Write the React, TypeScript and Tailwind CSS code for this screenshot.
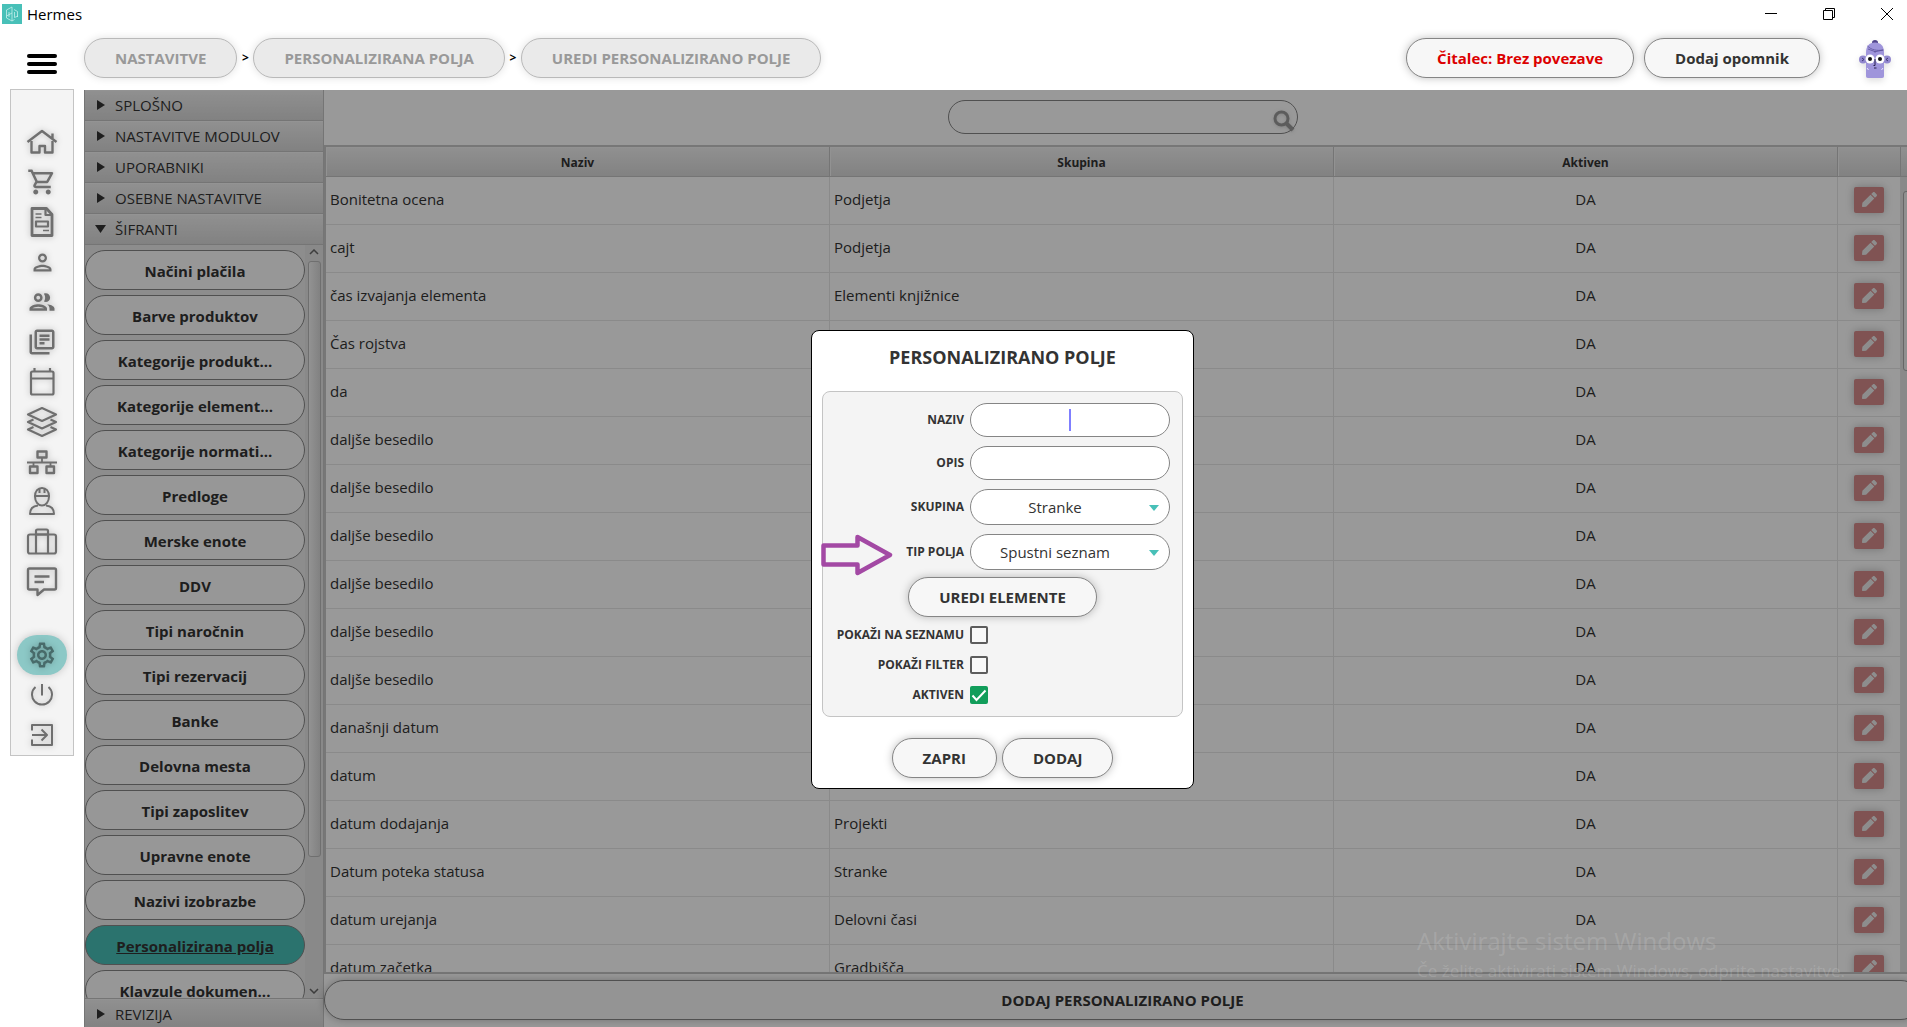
import { twMerge } from 'tailwind-merge';
import type { ReactNode } from 'react';
import { FaPen } from 'react-icons/fa';
import {
  MdOutlineShoppingCart,
  MdOutlinePerson,
  MdOutlineGroup,
  MdOutlineLibraryBooks,
  MdOutlineSettings,
} from 'react-icons/md';

const sections = ['SPLOŠNO', 'NASTAVITVE MODULOV', 'UPORABNIKI', 'OSEBNE NASTAVITVE'];

const codeLists = [
  'Načini plačila',
  'Barve produktov',
  'Kategorije produkt...',
  'Kategorije element...',
  'Kategorije normati...',
  'Predloge',
  'Merske enote',
  'DDV',
  'Tipi naročnin',
  'Tipi rezervacij',
  'Banke',
  'Delovna mesta',
  'Tipi zaposlitev',
  'Upravne enote',
  'Nazivi izobrazbe',
  'Personalizirana polja',
  'Klavzule dokumen...',
];

const rows = [
  { name: 'Bonitetna ocena', group: 'Podjetja' },
  { name: 'cajt', group: 'Podjetja' },
  { name: 'čas izvajanja elementa', group: 'Elementi knjižnice' },
  { name: 'Čas rojstva', group: 'Stranke' },
  { name: 'da', group: 'Stranke' },
  { name: 'daljše besedilo', group: 'Stranke' },
  { name: 'daljše besedilo', group: 'Stranke' },
  { name: 'daljše besedilo', group: 'Stranke' },
  { name: 'daljše besedilo', group: 'Stranke' },
  { name: 'daljše besedilo', group: 'Stranke' },
  { name: 'daljše besedilo', group: 'Stranke' },
  { name: 'današnji datum', group: 'Stranke' },
  { name: 'datum', group: 'Stranke' },
  { name: 'datum dodajanja', group: 'Projekti' },
  { name: 'Datum poteka statusa', group: 'Stranke' },
  { name: 'datum urejanja', group: 'Delovni časi' },
  { name: 'datum začetka', group: 'Gradbišča' },
];

function Drawn({ children, width = 2.4 }: { children: ReactNode; width?: number }) {
  return (
    <svg
      viewBox="0 0 40 40"
      className="size-10"
      fill="none"
      stroke="currentColor"
      strokeWidth={width}
      strokeLinejoin="round"
      aria-hidden="true"
    >
      {children}
    </svg>
  );
}

const HomeIcon = () => (
  <Drawn>
    <path d="M5.5 20 20 9l14.500 11M30.500 17v-5.500" />
    <path d="M9.500 19v11.500h8V24h5.500v6.500h7.500V19" />
  </Drawn>
);

const InvoiceIcon = () => (
  <Drawn width={2.2}>
    <path d="M10 6.500h14.500l5.500 6V33.500H10z" strokeWidth="2.800" />
    <path d="M23.500 6.500v6.500H30" />
    <path d="M13.500 12h6M13.500 15.500h6M21 28.500h6" strokeWidth="1.600" />
    <path d="M14 19.500h12v5H14z" />
  </Drawn>
);

const CalendarIcon = () => (
  <Drawn width={2.2}>
    <rect x="9" y="9.500" width="22.500" height="23" rx="1.500" />
    <path d="M9 16.500h22.500M12.500 6v4M28 6v4" />
  </Drawn>
);

const LayersIcon = () => (
  <Drawn width={2.2}>
    <path d="M20 6 34 12.500 20 19 6 12.500z" />
    <path d="m11.500 17.500-5.500 2.500 14 6.500 14-6.500-5.500-2.500" />
    <path d="m11.500 25-5.500 2.500L20 34l14-6.500-5.500-2.500" />
  </Drawn>
);

const NetworkIcon = () => (
  <Drawn width={2.4}>
    <path d="M15.500 9.500h9v6h-9zM8 24.500h7.500V31H8zM24.500 24.500H32V31h-7.500z" />
    <path d="M5 20.500h30M20 16v4.500M11.500 20.500v4M28.500 20.500v4" strokeWidth="1.800" />
  </Drawn>
);

const WorkerIcon = () => (
  <Drawn width={2}>
    <path d="M13 14.500c0-5.500 3-8.500 7-8.500s7 3 7 8.500c0 5-3 9-7 9s-7-4-7-9z" />
    <path d="M12 14h16M17.500 6.500V11M22.500 6.500V11" />
    <path d="M16 23.500c-5 .5-8 2.500-8 8.500h24c0-6-3-8-8-8.500" />
  </Drawn>
);

const SuitcaseIcon = () => (
  <Drawn width={2.2}>
    <rect x="6" y="12.500" width="28" height="19" rx="2" />
    <path d="M14 31.500V9c0-1 .5-1.500 1.500-1.500h9c1 0 1.500.5 1.500 1.500v22.500M14 12.500h12" />
  </Drawn>
);

const CommentIcon = () => (
  <Drawn>
    <path d="M7.500 6.500h25c1 0 1.500.5 1.500 1.500v18c0 1-.5 1.500-1.500 1.500H22L15.500 33v-5.500h-8c-1 0-1.500-.5-1.500-1.500V8c0-1 .5-1.500 1.500-1.500z" />
    <path d="M12.500 14.500h15M12.500 20h9.500" />
  </Drawn>
);

const PowerIcon = () => (
  <Drawn width={2}>
    <path d="M13.500 12A10 10 0 1 0 26.500 12M20 9v11.500" />
  </Drawn>
);

const ExitIcon = () => (
  <Drawn width={2}>
    <path d="M10 15.500V10h20v20H10v-5.500M10 20h14.500M19.500 14.500 25 20l-5.500 5.500" />
  </Drawn>
);

function Mascot() {
  return (
    <svg viewBox="0 0 32 38" className="h-[38px] w-8 drop-shadow-md" aria-label="Hermes">
      <ellipse cx="16" cy="2.500" rx="3" ry="2.500" fill="#51458c" />
      <circle cx="4" cy="19.500" r="4" fill="#9288cf" />
      <circle cx="28" cy="19.500" r="4" fill="#9288cf" />
      <path d="M3 18l2 1.500L3 21M29 18l-2 1.500 2 1.500" fill="none" stroke="#433a78" />
      <path d="M7 13C7 6 10 2.500 16 2.500S25 6 25 13v23c0 1-.5 2-2 2H9c-1.500 0-2-1-2-2z" fill="#9f95db" />
      <path d="M8.500 6c4 4 9 5 16 4M9 9l8 3M15 12l9-2" fill="none" stroke="#5c519b" strokeWidth=".8" />
      <circle cx="11" cy="19" r="4.500" fill="#fff" />
      <circle cx="21" cy="19" r="4.500" fill="#fff" />
      <circle cx="11" cy="19" r="2" fill="#111" />
      <circle cx="21" cy="19" r="2" fill="#111" />
      <path d="M16 19v6.500h-1.500M15 28h2.500" fill="none" stroke="#28204f" />
      <path d="M8 28l1.500 2M24 28l-1.500 2" stroke="#e8e4ff" />
    </svg>
  );
}

function PillButton({ children, className }: { children: ReactNode; className?: string }) {
  return (
    <button
      type="button"
      className={twMerge(
        'h-10 rounded-full border border-[#858585] bg-[#f7f7f7] px-[30px] text-[15px] font-bold whitespace-nowrap shadow-[0_0_8px_rgba(0,0,0,0.25)]',
        className
      )}
    >
      {children}
    </button>
  );
}

const crumb = 'border-[#b9b9b9] bg-[#eaeaea] text-[#999] shadow-[0_0_8px_rgba(0,0,0,0.12)]';
const bar = 'bg-linear-to-b from-[#f1f1f1] to-[#d8d8d8]';

function SectionHeader({ title, open }: { title: string; open?: boolean }) {
  return (
    <button
      type="button"
      className={twMerge(
        'flex h-[31px] w-full shrink-0 items-center gap-2 border-b border-[#c3c3c3] pl-2.5 text-left text-[15px] shadow-[inset_0_1px_0_#f6f6f6]',
        bar
      )}
    >
      <svg viewBox="0 0 12 12" className="size-3" fill="#333" aria-hidden="true">
        {open ? <path d="M0 2h11L5.500 10z" /> : <path d="M2 1v10l8-5z" />}
      </svg>
      {title}
    </button>
  );
}

function Row({ id, label, children }: { id: string; label: string; children: ReactNode }) {
  return (
    <div className="flex items-center gap-1.5">
      <label htmlFor={id} className="w-[141px] text-right text-[12px] font-bold whitespace-nowrap">
        {label}
      </label>
      {children}
    </div>
  );
}

function SelectField({ id, label, value }: { id: string; label: string; value: string }) {
  return (
    <Row id={id} label={label}>
      <div className="relative">
        <select
          id={id}
          className="block h-9 w-[200px] appearance-none rounded-full border border-[#858585] bg-white pr-[30px] text-center text-[15px] [text-align-last:center]"
        >
          <option>{value}</option>
        </select>
        <svg viewBox="0 0 10 6" className="pointer-events-none absolute top-4 right-[11px] h-1.5 w-2.5" aria-hidden="true">
          <path d="M0 0h10L5 6z" fill="#48c0b8" />
        </svg>
      </div>
    </Row>
  );
}

function CheckField({ id, label, checked }: { id: string; label: string; checked?: boolean }) {
  return (
    <Row id={id} label={label}>
      <span className="relative block size-[18px]">
        <input
          id={id}
          type="checkbox"
          defaultChecked={checked}
          className="block size-[18px] appearance-none rounded-[2px] border-2 border-[#5c5c5c] bg-white/40 checked:border-[#119d5a] checked:bg-[#119d5a]"
        />
        {checked && (
          <svg viewBox="0 0 18 18" className="pointer-events-none absolute inset-0" aria-hidden="true">
            <path d="M2.500 9.500 6.500 14 15.500 4.500" fill="none" stroke="#fff" strokeWidth="2" />
          </svg>
        )}
      </span>
    </Row>
  );
}

function TitleBar() {
  return (
    <div className="flex h-7 shrink-0 items-center pr-3.5 pl-0.5 text-black">
      <svg viewBox="0 0 20 20" className="size-5" fill="none" stroke="#d4f5f2" strokeWidth=".7" aria-hidden="true">
        <path d="M0 0h20v20H0z" fill="#48c0b8" stroke="none" />
        <path d="M10 3 4.500 6v8l5.500 3V3M4.500 12l5.500-3M7 8v5M12 5.500 15.500 7.500V13M12.500 8v5.500L16 12M10 17l2.500-1.500" />
      </svg>
      <span className="ml-[5px] text-[15px]">Hermes</span>
      <div className="ml-auto flex gap-[46px]">
        <button type="button" aria-label="Minimize">
          <svg viewBox="0 0 12 12" className="size-3" stroke="#000"><path d="M0 5.500h12" /></svg>
        </button>
        <button type="button" aria-label="Restore">
          <svg viewBox="0 0 12 12" className="size-3" stroke="#000" fill="none">
            <path d="M.5 2.500h9v9h-9zM2.500 2.500v-2h9v9h-2" />
          </svg>
        </button>
        <button type="button" aria-label="Close">
          <svg viewBox="0 0 12 12" className="size-3" stroke="#000"><path d="M0 0l12 12M12 0 0 12" /></svg>
        </button>
      </div>
    </div>
  );
}

function Rail() {
  const item = 'flex h-10 w-[50px] items-center justify-center rounded-full';
  return (
    <nav className="mx-2.5 -mt-px flex w-16 shrink-0 flex-col items-center self-start border border-[#c4c4c4] bg-[#f4f4f4] pt-8 text-[#6f6f6f] [&_svg]:drop-shadow-[0_0_3px_rgba(0,0,0,0.25)]">
      <button type="button" aria-label="Domov" className={item}><HomeIcon /></button>
      <button type="button" aria-label="Prodaja" className={item}><MdOutlineShoppingCart size={30} /></button>
      <button type="button" aria-label="Računi" className={item}><InvoiceIcon /></button>
      <button type="button" aria-label="Stranka" className={item}><MdOutlinePerson size={27} /></button>
      <button type="button" aria-label="Stranke" className={item}><MdOutlineGroup size={30} /></button>
      <button type="button" aria-label="Dokumenti" className={item}><MdOutlineLibraryBooks size={30} /></button>
      <button type="button" aria-label="Koledar" className={item}><CalendarIcon /></button>
      <button type="button" aria-label="Skladišče" className={item}><LayersIcon /></button>
      <button type="button" aria-label="Struktura" className={item}><NetworkIcon /></button>
      <button type="button" aria-label="Delavci" className={item}><WorkerIcon /></button>
      <button type="button" aria-label="Projekti" className={item}><SuitcaseIcon /></button>
      <button type="button" aria-label="Sporočila" className={item}><CommentIcon /></button>
      <button
        type="button"
        aria-label="Nastavitve"
        className={twMerge(item, 'mt-[33px] bg-[#8cc8c6] text-[#486b6a] shadow-[0_0_8px_rgba(0,0,0,0.2)]')}
      >
        <MdOutlineSettings size={30} />
      </button>
      <button type="button" aria-label="Odjava" className={item}><PowerIcon /></button>
      <button type="button" aria-label="Izhod" className={item}><ExitIcon /></button>
    </nav>
  );
}

function Sidebar() {
  return (
    <aside className="flex w-60 shrink-0 flex-col border-x border-[#c3c3c3] bg-[#ececec]">
      {sections.map((title) => (
        <SectionHeader key={title} title={title} />
      ))}
      <SectionHeader title="ŠIFRANTI" open />
      <div className="flex min-h-0 flex-1 overflow-hidden">
        <div className="flex w-[220px] flex-col gap-[5px] pt-[5px]">
          {codeLists.map((name) => (
            <button
              key={name}
              type="button"
              className={twMerge(
                'h-10 shrink-0 rounded-full border border-[#858585] bg-[#fcfcfc] pt-0.5 text-[15px] font-bold',
                name === 'Personalizirana polja' && 'bg-[#48c0b8] underline'
              )}
            >
              {name}
            </button>
          ))}
        </div>
        <div className="flex flex-1 flex-col items-center justify-between bg-[#e4e4e4] py-1">
          <svg viewBox="0 0 10 6" className="h-1.5 w-2.5" fill="none" stroke="#666" strokeWidth="1.500"><path d="M1 5l4-4 4 4" /></svg>
          <div className="mt-1.5 mb-auto h-4/5 w-[13px] rounded-[3px] border border-[#b9b9b9] bg-linear-to-r from-[#f4f4f4] to-[#d8d8d8]" />
          <svg viewBox="0 0 10 6" className="h-1.5 w-2.5" fill="none" stroke="#666" strokeWidth="1.500"><path d="M1 1l4 4 4-4" /></svg>
        </div>
      </div>
      <div className="flex h-[29px] shrink-0 overflow-hidden border-t border-[#c3c3c3]">
        <SectionHeader title="REVIZIJA" />
      </div>
    </aside>
  );
}

function FieldsTable() {
  const th = 'h-[30px] border-r border-b border-[#c3c3c3] pt-0.5 text-[12px] font-bold shadow-[inset_1px_1px_0_#f4f4f4]';
  return (
    <div className="flex min-h-0 flex-1 overflow-hidden border-y-2 border-l-2 border-[#c6c6c6]">
      <div className="min-w-0 flex-1 overflow-hidden">
        <table className="w-full table-fixed border-separate border-spacing-0 text-[15px]">
          <colgroup>
            <col />
            <col />
            <col />
            <col className="w-[63px]" />
          </colgroup>
          <thead>
            <tr className={bar}>
              <th className={th}>Naziv</th>
              <th className={th}>Skupina</th>
              <th className={th}>Aktiven</th>
              <th className={th} aria-label="Uredi" />
            </tr>
          </thead>
          <tbody className="[&_td]:border-r [&_td]:border-b [&_td]:border-[#e6e6e6] [&_td]:pb-0.5">
            {rows.map((row, i) => (
              <tr key={i} className="h-12">
                <td className="pl-1">{row.name}</td>
                <td className="pl-1">{row.group}</td>
                <td className="text-center">DA</td>
                <td>
                  <button
                    type="button"
                    aria-label="Uredi"
                    className="mx-auto flex h-[26px] w-[30px] items-center justify-center rounded-[2px] bg-[#d58a8a] text-[#ececec] shadow-[0_0_8px_rgba(0,0,0,0.25)]"
                  >
                    <FaPen size={15} />
                  </button>
                </td>
              </tr>
            ))}
          </tbody>
        </table>
      </div>
      <div className="flex w-5 flex-col bg-[#e4e4e4]">
        <div className={twMerge('h-[30px] shrink-0 border-b border-[#c3c3c3]', bar)} />
        <div className="mt-3.5 ml-0.5 h-[180px] rounded-[3px] border border-[#aaa] bg-[#f0f0f0]" />
      </div>
    </div>
  );
}

function FieldDialog() {
  return (
    <form
      role="dialog"
      aria-labelledby="dialog-title"
      className="relative flex w-[383px] flex-col items-center rounded-lg border border-black bg-white px-2.5 pb-2.5"
    >
      <h2 id="dialog-title" className="flex h-[60px] items-center pb-2 text-[18px] font-bold">
        PERSONALIZIRANO POLJE
      </h2>
      <div className="flex w-full flex-col rounded-lg border border-[#c4c4c4] bg-[#f4f4f4] pt-[11px] pr-3 pb-3">
        <div className="flex flex-col gap-[9px]">
          <Row id="naziv" label="NAZIV">
            <div className="relative">
              <input id="naziv" type="text" className="block h-[34px] w-[200px] rounded-full border border-[#858585] bg-white px-4 text-center text-[15px]" />
              <span className="absolute top-1.5 left-[99px] h-[22px] w-0.5 bg-[#7f7fff]" />
            </div>
          </Row>
          <Row id="opis" label="OPIS">
            <input id="opis" type="text" className="block h-[34px] w-[200px] rounded-full border border-[#858585] bg-white px-4 text-center text-[15px]" />
          </Row>
          <SelectField id="skupina" label="SKUPINA" value="Stranke" />
          <SelectField id="tip" label="TIP POLJA" value="Spustni seznam" />
        </div>
        <PillButton className="mt-[7px] mb-[9px] ml-3 self-center">UREDI ELEMENTE</PillButton>
        <div className="flex flex-col gap-3">
          <CheckField id="seznam" label="POKAŽI NA SEZNAMU" />
          <CheckField id="filter" label="POKAŽI FILTER" />
          <CheckField id="aktiven" label="AKTIVEN" checked />
        </div>
      </div>
      <div className="mt-[21px] flex gap-[5px]">
        <PillButton>ZAPRI</PillButton>
        <PillButton>DODAJ</PillButton>
      </div>
      {/* Pointer to the field type */}
      <svg
        viewBox="0 0 72 44"
        className="absolute top-[202px] left-[9px] h-11 w-[72px]"
        fill="none"
        stroke="#a349a4"
        strokeWidth="4.500"
        strokeLinejoin="round"
        aria-hidden="true"
      >
        <path d="M2.500 12.500h34V4L69 22 36.500 40V31.500h-34z" />
      </svg>
    </form>
  );
}

export default function App() {
  return (
    <div className="flex h-screen flex-col overflow-hidden bg-white font-['Open_Sans',sans-serif] text-[#333]">
      <TitleBar />

      {/* Header */}
      <header className="flex h-[62px] shrink-0 items-start pt-2.5 pr-4">
        <button type="button" aria-label="Meni" className="flex h-10 w-[84px] flex-col justify-center gap-1 pt-3 pl-[27px]">
          <span className="h-1 w-[30px] rounded-full bg-black" />
          <span className="h-1 w-[30px] rounded-full bg-black" />
          <span className="h-1 w-[30px] rounded-full bg-black" />
        </button>
        <nav className="flex items-center text-[12px] font-bold text-black">
          <PillButton className={crumb}>NASTAVITVE</PillButton>
          <span className="w-4 text-center">&gt;</span>
          <PillButton className={crumb}>PERSONALIZIRANA POLJA</PillButton>
          <span className="w-4 text-center">&gt;</span>
          <PillButton className={crumb}>UREDI PERSONALIZIRANO POLJE</PillButton>
        </nav>
        <div className="ml-auto flex items-center gap-2.5">
          <PillButton className="text-[#dc0000]">Čitalec: Brez povezave</PillButton>
          <PillButton>Dodaj opomnik</PillButton>
        </div>
        <div className="ml-[39px] pt-0.5">
          <Mascot />
        </div>
      </header>

      <div className="flex min-h-0 flex-1">
        <Rail />
        <main className="relative min-w-0 flex-1 overflow-hidden">
          {/* The settings page is a little wider than the window */}
          <div className="flex h-full w-[calc(100%+14px)]">
            <Sidebar />
            <section className="flex min-w-0 flex-1 flex-col bg-white">
              <div className="flex h-[55px] shrink-0 items-start justify-center pt-2.5">
                <div className="relative">
                  <input
                    type="search"
                    aria-label="Iskanje"
                    className="block h-[34px] w-[350px] rounded-full border border-[#858585] px-4 text-[15px]"
                  />
                  <svg viewBox="0 0 22 22" className="absolute top-2.5 right-[3px] size-[22px] drop-shadow" fill="none" stroke="#9a9a9a" strokeWidth="3" aria-hidden="true">
                    <circle cx="8.500" cy="8.500" r="6.500" />
                    <path d="M13 13l7 7" strokeWidth="4" />
                  </svg>
                </div>
              </div>
              <FieldsTable />
              <div className="h-[53px] shrink-0 pt-1.5">
                <PillButton className="w-full">DODAJ PERSONALIZIRANO POLJE</PillButton>
              </div>
            </section>
          </div>

          <div className="absolute inset-y-0 left-0 flex w-[calc(100%+14px)] items-center justify-center bg-black/40 pt-0.5">
            <FieldDialog />
          </div>

          {/* Windows activation notice */}
          <div className="pointer-events-none absolute right-[62px] bottom-[42px] whitespace-nowrap text-white/15">
            <p className="text-[24px] leading-8">Aktivirajte sistem Windows</p>
            <p className="text-[17px] leading-7">Če želite aktivirati sistem Windows, odprite nastavitve.</p>
          </div>
        </main>
      </div>
    </div>
  );
}
